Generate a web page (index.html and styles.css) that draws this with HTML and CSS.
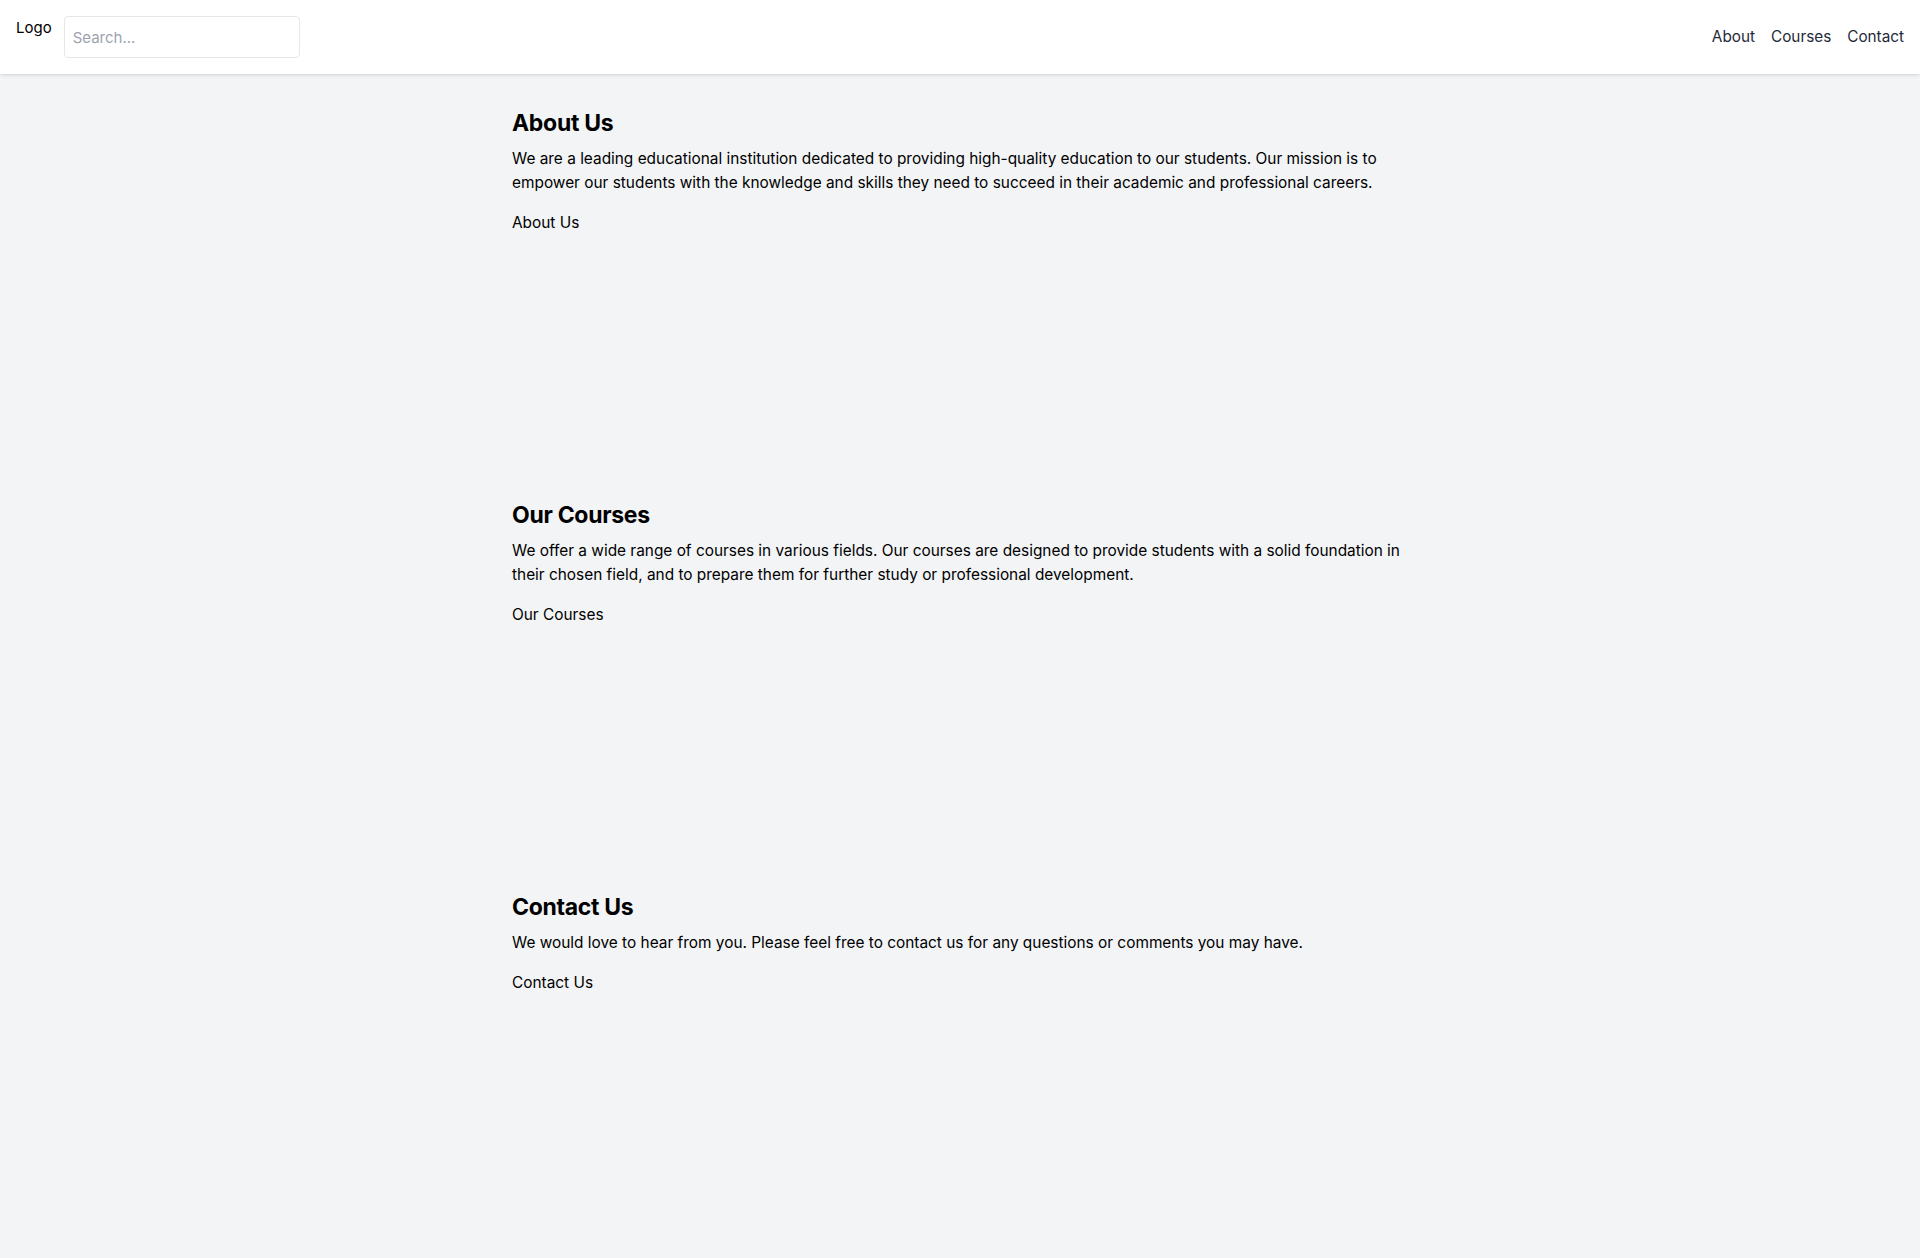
FILE: index.html
```html
<!DOCTYPE html>
<html lang="en">
<head>
<meta charset="utf-8">
<title>Education</title>
<link rel="stylesheet" href="styles.css">
</head>
<body>
<header class="site-header">
  <div class="brand">
    <div class="logo">Logo</div>
    <input class="search" type="text" placeholder="Search...">
  </div>
  <nav class="nav">
    <a href="#about">About</a>
    <a href="#courses">Courses</a>
    <a href="#contact">Contact</a>
  </nav>
</header>
<main class="main">
  <section class="section" id="about">
    <h2 class="section-title">About Us</h2>
    <p class="section-text">We are a leading educational institution dedicated to providing high-quality education to our students. Our mission is to empower our students with the knowledge and skills they need to succeed in their academic and professional careers.</p>
    <div class="media">About Us</div>
  </section>
  <section class="section" id="courses">
    <h2 class="section-title">Our Courses</h2>
    <p class="section-text">We offer a wide range of courses in various fields. Our courses are designed to provide students with a solid foundation in their chosen field, and to prepare them for further study or professional development.</p>
    <div class="media">Our Courses</div>
  </section>
  <section class="section" id="contact">
    <h2 class="section-title">Contact Us</h2>
    <p class="section-text">We would love to hear from you. Please feel free to contact us for any questions or comments you may have.</p>
    <div class="media">Contact Us</div>
  </section>
</main>
</body>
</html>
```

FILE: styles.css
```css
* { box-sizing: border-box; }
html, body { margin: 0; padding: 0; }
body {
  background: #f3f4f6;
  color: #000;
  font-family: Inter, "Noto Sans", "Liberation Sans", sans-serif;
  font-size: 16px;
  line-height: 24px;
}
.site-header {
  background: #fff;
  display: flex;
  justify-content: space-between;
  align-items: center;
  padding: 16px;
  height: 74px;
  box-shadow: 0 2px 4px -1px rgba(0,0,0,0.12), 0 1px 2px -1px rgba(0,0,0,0.08);
  position: relative;
}
.brand {
  display: flex;
  align-items: flex-start;
  gap: 12px;
  height: 42px;
}
.logo {
  font-size: 15px;
  line-height: 24px;
}
.search {
  width: 236px;
  height: 42px;
  border: 1px solid #e5e7eb;
  border-radius: 4px;
  padding: 8px;
  font-family: inherit;
  font-size: 15px;
  color: #111827;
  background: #fff;
  outline: none;
}
.search::placeholder { color: #9ca3af; }
.nav {
  display: flex;
  gap: 16px;
}
.nav a {
  color: #1f2937;
  text-decoration: none;
  font-size: 15.3px;
}
.main {
  max-width: 896px;
  margin: 0 auto;
  padding: 17px 0 16px;
}
.section {
  padding: 16px 0;
}
.section-title {
  margin: 0 0 8px;
  font-size: 23px;
  line-height: 32px;
  font-weight: 700;
  letter-spacing: -0.3px;
}
.section-text {
  margin: 0 0 16px;
  font-size: 15.4px;
  line-height: 24px;
}
.media {
  height: 256px;
  font-size: 15.4px;
}
```
